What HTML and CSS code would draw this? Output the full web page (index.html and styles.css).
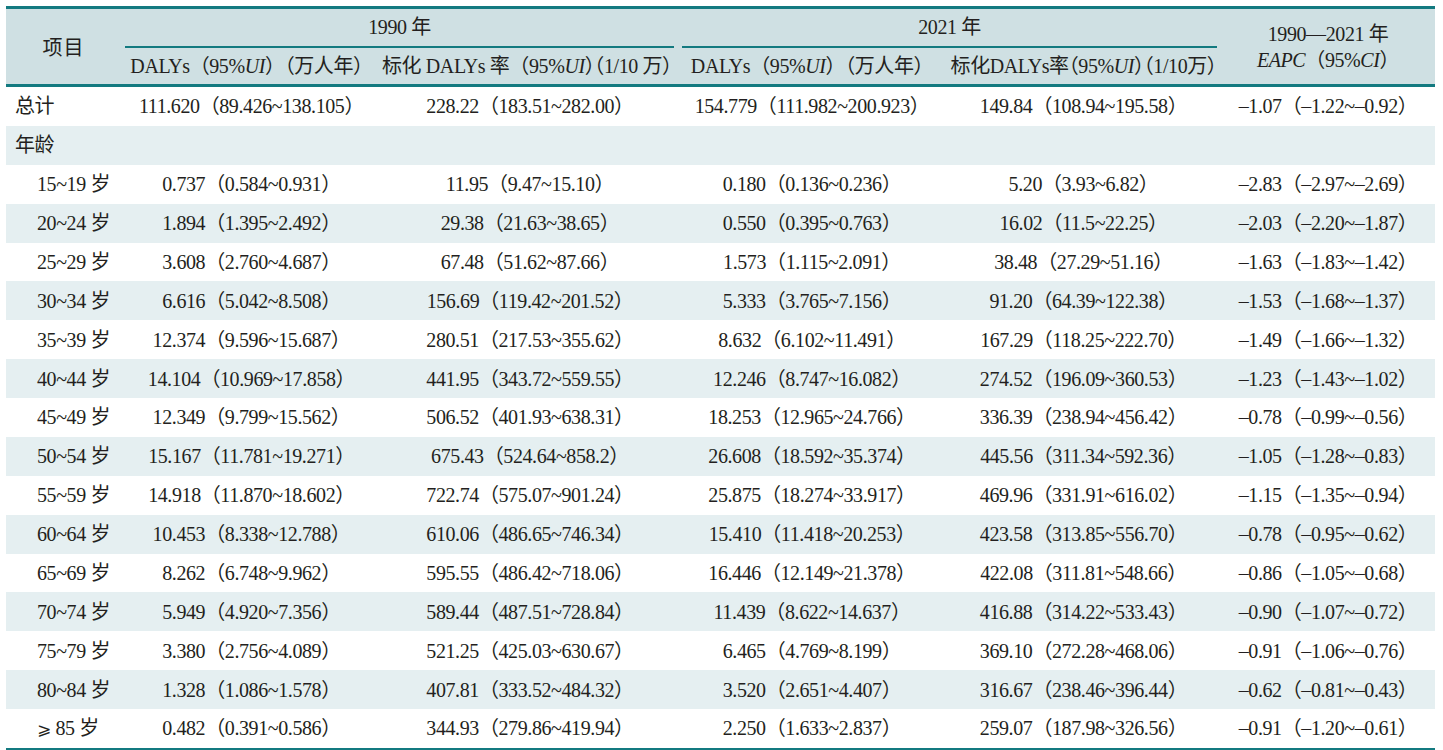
FILE: index.html
```html
<!DOCTYPE html>
<html lang="zh-CN">
<head>
<meta charset="utf-8">
<title>DALYs 表</title>
<link rel="stylesheet" href="styles.css">
</head>
<body>
<table class="tbl">
  <colgroup>
    <col class="c-item">
    <col class="c-a">
    <col class="c-b">
    <col class="c-c">
    <col class="c-d">
    <col class="c-e">
  </colgroup>
  <thead>
    <tr class="h1">
      <th rowspan="2" class="item-h">项目</th>
      <th colspan="2" class="grp"><div class="grp-label">1990 年</div></th>
      <th colspan="2" class="grp"><div class="grp-label">2021 年</div></th>
      <th rowspan="2" class="eapc-h">1990—2021 年<br><i>EAPC</i>（95%<i>CI</i>）</th>
    </tr>
    <tr class="h2">
      <th>DALYs（95%<i>UI</i>）（万人年）</th>
      <th>标化 DALYs 率（95%<i>UI</i><span class="halt">）</span>（1/10 万）</th>
      <th>DALYs（95%<i>UI</i>）（万人年）</th>
      <th class="halt">标化DALYs率（95%<i>UI</i>）（1/10万）</th>
    </tr>
  </thead>
  <tbody>
    <tr><td class="lbl">总计</td><td>111.620（89.426~138.105）</td><td>228.22（183.51~282.00）</td><td>154.779（111.982~200.923）</td><td>149.84（108.94~195.58）</td><td>–1.07（–1.22~–0.92）</td></tr>
    <tr class="alt"><td class="lbl">年龄</td><td></td><td></td><td></td><td></td><td></td></tr>
    <tr><td class="lbl sub">15~19 岁</td><td>0.737（0.584~0.931）</td><td>11.95（9.47~15.10）</td><td>0.180（0.136~0.236）</td><td>5.20（3.93~6.82）</td><td>–2.83（–2.97~–2.69）</td></tr>
    <tr class="alt"><td class="lbl sub">20~24 岁</td><td>1.894（1.395~2.492）</td><td>29.38（21.63~38.65）</td><td>0.550（0.395~0.763）</td><td>16.02（11.5~22.25）</td><td>–2.03（–2.20~–1.87）</td></tr>
    <tr><td class="lbl sub">25~29 岁</td><td>3.608（2.760~4.687）</td><td>67.48（51.62~87.66）</td><td>1.573（1.115~2.091）</td><td>38.48（27.29~51.16）</td><td>–1.63（–1.83~–1.42）</td></tr>
    <tr class="alt"><td class="lbl sub">30~34 岁</td><td>6.616（5.042~8.508）</td><td>156.69（119.42~201.52）</td><td>5.333（3.765~7.156）</td><td>91.20（64.39~122.38）</td><td>–1.53（–1.68~–1.37）</td></tr>
    <tr><td class="lbl sub">35~39 岁</td><td>12.374（9.596~15.687）</td><td>280.51（217.53~355.62）</td><td>8.632（6.102~11.491）</td><td>167.29（118.25~222.70）</td><td>–1.49（–1.66~–1.32）</td></tr>
    <tr class="alt"><td class="lbl sub">40~44 岁</td><td>14.104（10.969~17.858）</td><td>441.95（343.72~559.55）</td><td>12.246（8.747~16.082）</td><td>274.52（196.09~360.53）</td><td>–1.23（–1.43~–1.02）</td></tr>
    <tr><td class="lbl sub">45~49 岁</td><td>12.349（9.799~15.562）</td><td>506.52（401.93~638.31）</td><td>18.253（12.965~24.766）</td><td>336.39（238.94~456.42）</td><td>–0.78（–0.99~–0.56）</td></tr>
    <tr class="alt"><td class="lbl sub">50~54 岁</td><td>15.167（11.781~19.271）</td><td>675.43（524.64~858.2）</td><td>26.608（18.592~35.374）</td><td>445.56（311.34~592.36）</td><td>–1.05（–1.28~–0.83）</td></tr>
    <tr><td class="lbl sub">55~59 岁</td><td>14.918（11.870~18.602）</td><td>722.74（575.07~901.24）</td><td>25.875（18.274~33.917）</td><td>469.96（331.91~616.02）</td><td>–1.15（–1.35~–0.94）</td></tr>
    <tr class="alt"><td class="lbl sub">60~64 岁</td><td>10.453（8.338~12.788）</td><td>610.06（486.65~746.34）</td><td>15.410（11.418~20.253）</td><td>423.58（313.85~556.70）</td><td>–0.78（–0.95~–0.62）</td></tr>
    <tr><td class="lbl sub">65~69 岁</td><td>8.262（6.748~9.962）</td><td>595.55（486.42~718.06）</td><td>16.446（12.149~21.378）</td><td>422.08（311.81~548.66）</td><td>–0.86（–1.05~–0.68）</td></tr>
    <tr class="alt"><td class="lbl sub">70~74 岁</td><td>5.949（4.920~7.356）</td><td>589.44（487.51~728.84）</td><td>11.439（8.622~14.637）</td><td>416.88（314.22~533.43）</td><td>–0.90（–1.07~–0.72）</td></tr>
    <tr><td class="lbl sub">75~79 岁</td><td>3.380（2.756~4.089）</td><td>521.25（425.03~630.67）</td><td>6.465（4.769~8.199）</td><td>369.10（272.28~468.06）</td><td>–0.91（–1.06~–0.76）</td></tr>
    <tr class="alt"><td class="lbl sub">80~84 岁</td><td>1.328（1.086~1.578）</td><td>407.81（333.52~484.32）</td><td>3.520（2.651~4.407）</td><td>316.67（238.46~396.44）</td><td>–0.62（–0.81~–0.43）</td></tr>
    <tr class="last"><td class="lbl sub"><span class="geq">⩾</span> 85 岁</td><td>0.482（0.391~0.586）</td><td>344.93（279.86~419.94）</td><td>2.250（1.633~2.837）</td><td>259.07（187.98~326.56）</td><td>–0.91（–1.20~–0.61）</td></tr>
  </tbody>
</table>
</body>
</html>
```
FILE: styles.css
```css
html, body {
  margin: 0;
  padding: 0;
  background: #ffffff;
}

body {
  padding: 6px 0 0 6px;
  font-family: "Liberation Serif", "Noto Sans CJK SC", serif;
  color: #231f20;
}

.tbl {
  table-layout: fixed;
  width: 1429px;
  border-collapse: separate;
  border-spacing: 0;
  font-size: 20px;
  letter-spacing: -0.4px;
}

.c-item { width: 115px; }
.c-a { width: 261px; }
.c-b { width: 296px; }
.c-c { width: 268px; }
.c-d { width: 275px; }
.c-e { width: 214px; }

thead th {
  background: #cfe0e3;
  font-weight: normal;
  padding: 0;
  white-space: nowrap;
  text-align: center;
  vertical-align: middle;
}

.h1 th {
  border-top: 3px solid #137a80;
}

.h1 th.item-h,
.h1 th.eapc-h,
.h2 th {
  border-bottom: 3px solid #137a80;
}

.h2 th {
  height: 36px;
  line-height: 36px;
}

.item-h {
  font-size: 20px;
  letter-spacing: 1px;
}

.eapc-h {
  line-height: 26px;
}

th.grp {
  padding: 0 4px;
}

.grp-label {
  height: 37px;
  line-height: 37px;
  border-bottom: 2px solid #137a80;
}

.halt {
  font-feature-settings: "halt" 1;
}

tbody td {
  height: 38.88px;
  padding: 0;
  line-height: 24px;
  text-align: center;
  vertical-align: middle;
  white-space: nowrap;
}

tbody tr.alt td {
  background: #e5eff1;
}

tbody td.lbl {
  text-align: left;
  padding-left: 9px;
}

tbody td.lbl.sub {
  padding-left: 31px;
}

tbody tr.last td {
  border-bottom: 3px solid #137a80;
}

.geq {
  font-family: "DejaVu Serif", "DejaVu Sans", serif;
  font-size: 17px;
}
```
